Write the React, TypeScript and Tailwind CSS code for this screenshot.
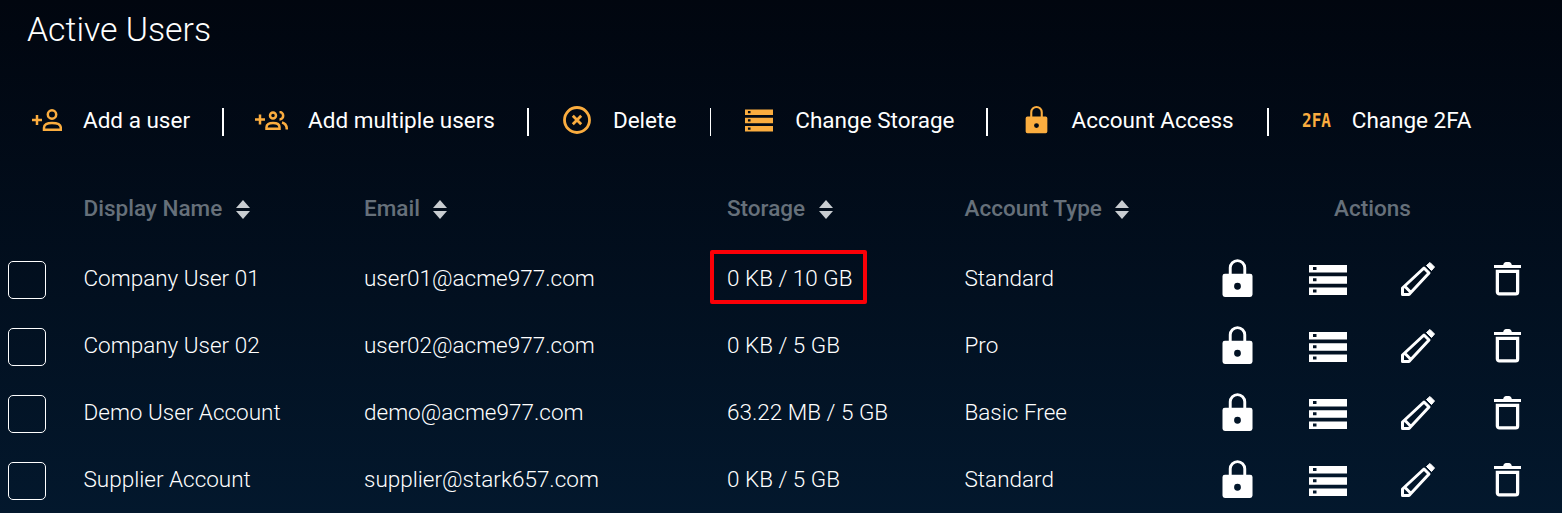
import type { ReactNode } from "react";

const LockIcon = ({ className }: { className?: string }) => (
    <svg viewBox="0 0 32 40" className={className}>
        <path d="M8.500 17V9a7.500 7.500 0 0 1 15 0V17" fill="none" stroke="currentColor" strokeWidth="3" />
        <path fillRule="evenodd" fill="currentColor" d="M3 15h26a2.500 2.500 0 0 1 2.500 2.500v19a2.500 2.500 0 0 1-2.500 2.500H3a2.500 2.500 0 0 1-2.500-2.500v-19A2.500 2.500 0 0 1 3 15zm13 9.500a3.500 3.500 0 1 0 0 7 3.500 3.500 0 0 0 0-7z" />
    </svg>
);

const StorageIcon = ({ className }: { className?: string }) => (
    <svg viewBox="0 0 38 30" className={className}>
        <path fillRule="evenodd" fill="currentColor" d="M0 0h38v7.500H0zM4 2v3h3.500V2z" />
        <path fillRule="evenodd" fill="currentColor" d="M0 11.200h38v7.500H0zM4 13.200v3h3.500v-3z" />
        <path fillRule="evenodd" fill="currentColor" d="M0 22.500h38V30H0zM4 24.500v3h3.500v-3z" />
    </svg>
);

const PencilIcon = ({ className }: { className?: string }) => (
    <svg viewBox="0 0 34 34" className={className}>
        <path d="M25.500 3.500 29 .5l4.500 4.500-3 3.500z" fill="currentColor" stroke="currentColor" strokeWidth="1" strokeLinejoin="round" />
        <path d="M23 6 28 11 8 32.500H1.500V26zM4.500 25l4.500 4.500" fill="none" stroke="currentColor" strokeWidth="3" strokeLinejoin="round" />
    </svg>
);

const TrashIcon = ({ className }: { className?: string }) => (
    <svg viewBox="0 0 28 36" className={className}>
        <path d="M0 4h9.500C10 1.500 11.500 1 14 1s4 .5 4.500 3H28v3H0z" fill="currentColor" />
        <path d="M3.500 10.500h21V32a2 2 0 0 1-2 2h-17a2 2 0 0 1-2-2z" fill="none" stroke="currentColor" strokeWidth="3.400" />
    </svg>
);

const AddUserIcon = () => (
    <svg viewBox="0 0 30 22" className="h-[22px] w-[30px]" fill="none" stroke="currentColor" strokeWidth="2.500">
        <path d="M0 11h10M5 6v10" />
        <circle cx="20" cy="5.500" r="4.200" />
        <path d="M12 20.700v-2c0-3.200 3-4.700 8-4.700s8.800 1.500 8.800 4.700v2z" />
    </svg>
);

const AddUsersIcon = () => (
    <svg viewBox="0 0 33 19" className="h-[19px] w-[33px]" fill="none" stroke="currentColor" strokeWidth="2.500">
        <path d="M0 8.500h10M5 3.500v10" />
        <circle cx="18" cy="4.500" r="3" />
        <path d="M11.500 17.700v-1.500c0-2.800 2.500-4.200 6.500-4.200s6.500 1.400 6.500 4.200v1.500z" />
        <path d="M24.500 1a3.700 3.700 0 0 1 0 7.400M27 11.500c3 .7 4.800 3 4.800 7" />
    </svg>
);

const DeleteIcon = () => (
    <svg viewBox="0 0 28 28" className="h-[28px] w-[28px]" fill="none" stroke="currentColor" strokeWidth="2.800">
        <circle cx="14" cy="14" r="12.500" />
        <path d="M9.800 9.800l8.400 8.400M18.200 9.800l-8.400 8.400" />
    </svg>
);

const SortIcon = () => (
    <svg viewBox="0 0 14 19" className="h-[19px] w-[14px]" fill="currentColor">
        <path d="M7 0l7 8H0zM7 19l-7-8h14z" />
    </svg>
);

const tools: { label: string; icon: ReactNode; cell: string; wrap: string; sep?: string }[] = [
    { label: "Add a user", icon: <AddUserIcon />, cell: "w-[51px]", wrap: "ml-[32px] mr-[32px]", sep: "w-[2px]" },
    { label: "Add multiple users", icon: <AddUsersIcon />, cell: "w-[53px]", wrap: "ml-[31px] mr-[32px]", sep: "w-[2px]" },
    { label: "Delete", icon: <DeleteIcon />, cell: "w-[50px]", wrap: "ml-[34px] mr-[34px]", sep: "w-[1px]" },
    { label: "Change Storage", icon: <StorageIcon className="h-[23px] w-[28px]" />, cell: "w-[50px]", wrap: "ml-[34px] mr-[31px]", sep: "w-[2px]" },
    { label: "Account Access", icon: <LockIcon className="h-[28px] w-[23px]" />, cell: "w-[47px]", wrap: "ml-[37px] mr-[33px]", sep: "w-[2px]" },
    {
        label: "Change 2FA",
        icon: <span className="origin-left scale-x-[0.8] font-['DejaVu_Sans_Mono',monospace] text-[20px] leading-none font-bold">2FA</span>,
        cell: "w-[50px]",
        wrap: "ml-[33px]",
    },
];

const users = [
    { name: "Company User 01", email: "user01@acme977.com", storage: "0 KB / 10 GB", type: "Standard", marked: true },
    { name: "Company User 02", email: "user02@acme977.com", storage: "0 KB / 5 GB", type: "Pro" },
    { name: "Demo User Account", email: "demo@acme977.com", storage: "63.22 MB / 5 GB", type: "Basic Free" },
    { name: "Supplier Account", email: "supplier@stark657.com", storage: "0 KB / 5 GB", type: "Standard" },
];

const columns = "grid grid-cols-[83.500px_280.500px_363px_237.500px_228px_360px] items-center";

const HeadCell = ({ label }: { label: string }) => (
    <div className="flex items-center gap-[13.500px]">
        <span>{label}</span>
        <span className="text-[#c9cdd1]"><SortIcon /></span>
    </div>
);

export default function App() {
    return (
        <div className="h-[513px] w-[1562px] overflow-hidden bg-gradient-to-b from-[#01060f] to-[#03182d] font-['Roboto',sans-serif] text-white">
            <h1 className="pt-[9px] pl-[27px] text-[33.800px] leading-[42px] font-light">Active Users</h1>

            <div className="mt-[48px] flex h-[42px] items-center">
                {tools.map((tool) => (
                    <div key={tool.label} className="flex items-center">
                        <div className={`flex items-center ${tool.wrap}`}>
                            <span className={`flex items-center text-[#fbad3f] ${tool.cell}`}>{tool.icon}</span>
                            <span className="text-[22.500px] leading-[28px]">{tool.label}</span>
                        </div>
                        {tool.sep && <span className={`mt-[4px] h-[28px] bg-white ${tool.sep}`} />}
                    </div>
                ))}
            </div>

            <div className={`${columns} mt-[51px] h-[34px] text-[22.500px] font-medium text-[#66707a]`}>
                <div />
                <HeadCell label="Display Name" />
                <HeadCell label="Email" />
                <HeadCell label="Storage" />
                <HeadCell label="Account Type" />
                <div className="text-center">Actions</div>
            </div>

            <div className="mt-[19px]">
                {users.map((user) => (
                    <div key={user.email} className={`${columns} h-[67px] text-[22.500px] font-light`}>
                        <div className="pt-[3px] pl-[8px]">
                            <div className="h-[38px] w-[38px] rounded-[5px] border border-white" />
                        </div>
                        <div>{user.name}</div>
                        <div>{user.email}</div>
                        <div className="relative">
                            {user.storage}
                            {user.marked && (
                                <span className="absolute top-[-12px] left-[-17px] h-[54px] w-[157px] rounded-[2px] border-4 border-[#fb0007]" />
                            )}
                        </div>
                        <div>{user.type}</div>
                        <div className="grid grid-cols-4 items-center justify-items-center">
                            <LockIcon className="h-[39px] w-[31px]" />
                            <StorageIcon className="mt-[2px] h-[30px] w-[38px]" />
                            <PencilIcon className="h-[34px] w-[34px]" />
                            <TrashIcon className="h-[35px] w-[27px]" />
                        </div>
                    </div>
                ))}
            </div>
        </div>
    );
}
